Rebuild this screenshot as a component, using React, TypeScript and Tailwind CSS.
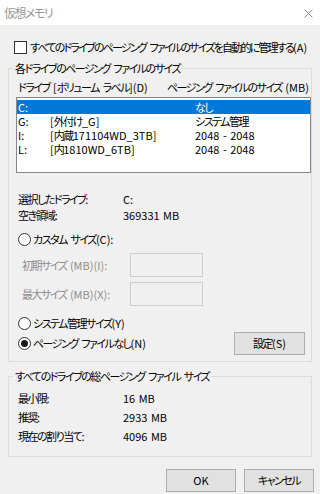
import React from "react";

const CJK = /([\u3000-\u30ff\u3400-\u9fff\uff00-\uffef]+)/;

function T({ text, tight }: { text: string; tight?: boolean }) {
  const parts = text.split(CJK);
  return (
    <>
      {parts.map((p, i) =>
        CJK.test(p) ? (
          <span key={i} className={tight ? "tracking-[-1.8px]" : "tracking-[-1.5px]"}>
            {p}
          </span>
        ) : (
          <span key={i}>{p}</span>
        )
      )}
    </>
  );
}

function Radio({ checked }: { checked?: boolean }) {
  return (
    <span className="w-[13px] h-[13px] rounded-full border border-[#333] bg-white flex items-center justify-center shrink-0">
      {checked && <span className="w-[7px] h-[7px] rounded-full bg-[#1a1a1a]" />}
    </span>
  );
}

function Btn({ children, w }: { children: React.ReactNode; w: string }) {
  return (
    <span className={`${w} h-[23px] bg-[#e1e1e1] border border-[#adadad] flex items-center justify-center shrink-0`}>
      {children}
    </span>
  );
}

function Info({ label, value, first }: { label: string; value: string; first?: string }) {
  return (
    <div className={`${first ?? ""} pl-[9px] h-[16px] flex items-center`}>
      <span className="w-[105px] whitespace-nowrap"><T text={label} /></span>
      <span>{value}</span>
    </div>
  );
}

export default function App() {
  const rows = [
    { d: "C:", l: "", s: "なし", sel: true },
    { d: "G:", l: "[外付け_G]", s: "システム管理" },
    { d: "I:", l: "[内蔵171104WD_3TB]", s: "2048 - 2048" },
    { d: "L:", l: "[内1810WD_6TB]", s: "2048 - 2048" },
  ];
  return (
    <div className="w-[320px] h-[494px] flex flex-col bg-[#f0f0f0] text-[11px] text-black [font-family:'Noto_Sans_CJK_JP',sans-serif] [font-feature-settings:'palt'] [word-spacing:1px]">
      <div className="h-[25px] bg-white flex items-center justify-between pl-[4px] pr-[7px]">
        <span className="text-[#999] text-[12px] leading-[14px]"><T text="仮想メモリ" /></span>
        <svg width="9" height="9" viewBox="0 0 9 9" className="mt-[1px]">
          <path d="M0.5 0.5 L8.5 8.5 M8.5 0.5 L0.5 8.5" stroke="#8a8a8a" strokeWidth="1" />
        </svg>
      </div>
      <div className="flex flex-col pl-[8px] pr-[8px]">
        <div className="mt-[15px] h-[14px] flex items-center pl-[6px]">
          <span className="w-[13px] h-[13px] border border-[#333] bg-white shrink-0" />
          <span className="ml-[3px] leading-[14px] whitespace-nowrap">
            <T tight text="すべてのドライブのページング ファイルのサイズを自動的に管理する(A)" />
          </span>
        </div>
        <fieldset className="min-w-0 mt-[7px] border border-[#dcdcdc] pb-[6px]">
          <legend className="ml-[4px] px-[2px] leading-[14px]"><T text="各ドライブのページング ファイルのサイズ" /></legend>
          <div className="mt-[5px] h-[14px] flex items-center leading-[14px] pl-[9px]">
            <span className="w-[149px] whitespace-nowrap"><T text="ドライブ [ボリューム ラベル](D)" /></span>
            <span className="whitespace-nowrap"><T text="ページング ファイルのサイズ (MB)" /></span>
          </div>
          <div className="mt-[3px] ml-[7px] h-[76px] border border-[#828790] bg-white pt-[2px]">
            {rows.map((r) => (
              <div
                key={r.d}
                className={`h-[14px] flex items-center leading-[14px] ${r.sel ? "bg-[#0078d7] text-white" : ""}`}
              >
                <span className="w-[33px] pl-[1px]">{r.d}</span>
                <span className="w-[145px] whitespace-nowrap"><T text={r.l} /></span>
                <span className="whitespace-nowrap"><T text={r.s} /></span>
              </div>
            ))}
          </div>
          <Info first="mt-[18px]" label="選択したドライブ:" value="C:" />
          <Info label="空き領域:" value="369331 MB" />
          <div className="mt-[8px] pl-[9px] h-[16px] flex items-center">
            <Radio />
            <span className="ml-[2px] whitespace-nowrap"><T text="カスタム サイズ(C):" /></span>
          </div>
          <div className="mt-[6px] pl-[13px] h-[24px] flex items-center">
            <span className="w-[108px] text-[#8d8d8d] whitespace-nowrap"><T text="初期サイズ (MB)(I):" /></span>
            <span className="w-[73px] h-[24px] border border-[#cccccc]" />
          </div>
          <div className="mt-[5px] pl-[13px] h-[24px] flex items-center">
            <span className="w-[108px] text-[#8d8d8d] whitespace-nowrap"><T text="最大サイズ (MB)(X):" /></span>
            <span className="w-[73px] h-[24px] border border-[#cccccc]" />
          </div>
          <div className="mt-[9px] pl-[9px] h-[16px] flex items-center">
            <Radio />
            <span className="ml-[2px] whitespace-nowrap"><T text="システム管理サイズ(Y)" /></span>
          </div>
          <div className="mt-[1px] pl-[9px] pr-[6px] h-[23px] flex items-center">
            <Radio checked />
            <span className="ml-[2px] whitespace-nowrap"><T text="ページング ファイルなし(N)" /></span>
            <span className="ml-auto">
              <Btn w="w-[71px]"><T text="設定(S)" /></Btn>
            </span>
          </div>
        </fieldset>
        <fieldset className="min-w-0 mt-[7px] border border-[#dcdcdc] pb-[12px]">
          <legend className="ml-[4px] px-[2px] leading-[14px]"><T text="すべてのドライブの総ページング ファイル サイズ" /></legend>
          <Info first="mt-[7px]" label="最小限:" value="16 MB" />
          <Info first="mt-[3px]" label="推奨:" value="2933 MB" />
          <Info first="mt-[3px]" label="現在の割り当て:" value="4096 MB" />
        </fieldset>
        <div className="mt-[12px] flex justify-end gap-[8px] -mr-[2px]">
          <Btn w="w-[70px]">OK</Btn>
          <Btn w="w-[70px]"><T text="キャンセル" /></Btn>
        </div>
      </div>
    </div>
  );
}
